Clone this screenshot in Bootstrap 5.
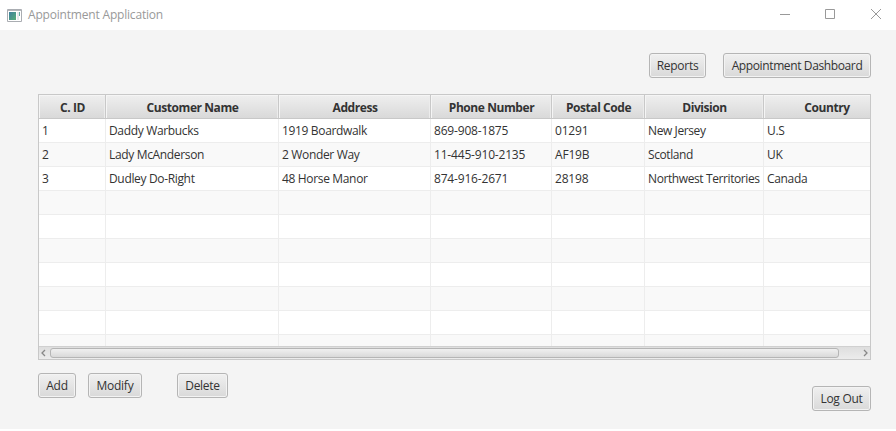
<!DOCTYPE html>
<html lang="en">
<head>
<meta charset="utf-8">
<title>Appointment Application</title>
<meta name="viewport" content="width=device-width, initial-scale=1">
<link href="https://cdn.jsdelivr.net/npm/bootstrap@5.3.0/dist/css/bootstrap.min.css" rel="stylesheet">
<style>
body{width:896px;height:431px;overflow:hidden;background:#fff;font-family:"Open Sans","Noto Sans",sans-serif;font-size:12px;line-height:16px;color:#333}
.titlebar{height:30px;background:#fff;color:#999;padding-left:7px}
.titlebar svg{display:block;flex:none}
.app-name{margin-left:6px;letter-spacing:-.19px}
.wincaps{margin-right:-2px}
.wincaps svg{width:45px;height:30px}
.workspace{height:399px;background:#f4f4f4;padding:23px 25px 0 38px}
.fx-btn{height:25px;padding:1px 0 0;border:1px solid #b5b5b5;border-radius:3px;background:linear-gradient(#f0f0f0,#d9d9d9);box-shadow:inset 0 0 0 1px #f3f3f3;color:#333;font-size:12px;line-height:16px;letter-spacing:-.28px;white-space:nowrap}
.w-rep{width:57px}.w-dash{width:148px;letter-spacing:-.38px}.w-add{width:38px}.w-mod{width:54px}.w-del{width:51px}.w-out{width:59px}
.gap-dash{margin-left:17px}.gap-mod{margin-left:12px}.gap-del{margin-left:35px}.drop-out{margin-top:13px}
.grid-box{margin-top:16px;height:266px;border:1px solid #c8c8c8;background:#fff;overflow:hidden}
.grid-rows{height:251px;overflow:hidden}
.customers{width:851px;table-layout:fixed;border-collapse:separate;border-spacing:0;margin:0;letter-spacing:-.34px}
.customers th{height:24px;padding:2px 0 0 1px;text-align:center;font-weight:700;border-right:1px solid #c8c8c8;border-bottom:1px solid #c8c8c8;background:linear-gradient(#efefef,#d9d9d9);box-shadow:inset 1px 1px 0 #f5f5f5,inset -1px 0 0 #ececec;letter-spacing:-.43px}
.customers td{height:24px;padding:0 0 0 3px;border-right:1px solid #ededed;border-bottom:1px solid #ededed;white-space:nowrap}
.customers td:nth-child(4),.customers td:nth-child(5){letter-spacing:-.18px}
.customers td:nth-child(6){letter-spacing:-.4px}
.customers tbody tr:nth-child(even){background:#f9f9f9}
.scroller{height:13px;border-top:1px solid #d0d0d0;background:linear-gradient(#dedede,#ececec)}
.scroller svg{width:11px;height:12px}
.thumb{width:789px;height:10px;border:1px solid #b5b5b5;border-radius:3px;background:linear-gradient(#f0f0f0,#d9d9d9);margin-top:1px}
.actions{margin-top:13px}
</style>
<script src="https://cdn.jsdelivr.net/npm/bootstrap@5.3.0/dist/js/bootstrap.bundle.min.js"></script>
</head>
<body>
<header class="titlebar d-flex align-items-center">
  <svg width="15" height="13" viewBox="0 0 15 13"><defs><linearGradient id="g" x2="1" y2="1"><stop stop-color="#3d7f9e"/><stop offset="1" stop-color="#55ad78"/></linearGradient></defs><path fill="#fff" stroke="#aaadb2" d="M.5.5h14v12H.5z"/><path stroke="#b4b7bc" d="M1 1.5h13"/><path fill="url(#g)" d="M2 3h7v8H2z"/><path fill="#e4e7ec" d="M10 3h2v8h-2z"/><path fill="#65aba2" d="M12 3h1v4h-1z"/></svg>
  <span class="app-name">Appointment Application</span>
  <div class="wincaps d-flex ms-auto">
    <svg viewBox="0 0 45 30"><path d="M17 14.5h10" stroke="#999"/></svg>
    <svg viewBox="0 0 45 30"><path d="M17.5 9.5h9v9h-9z" fill="none" stroke="#999"/></svg>
    <svg viewBox="0 0 45 30"><path d="M18 9l10 10M28 9l-10 10" stroke="#999"/></svg>
  </div>
</header>
<main class="workspace">
  <div class="d-flex justify-content-end">
    <button class="fx-btn w-rep">Reports</button>
    <button class="fx-btn w-dash gap-dash">Appointment Dashboard</button>
  </div>
  <div class="grid-box">
    <div class="grid-rows">
      <table class="customers">
        <colgroup><col style="width:67px"><col style="width:173px"><col style="width:152px"><col style="width:121px"><col style="width:93px"><col style="width:119px"><col style="width:126px"></colgroup>
        <thead><tr><th>C. ID</th><th>Customer Name</th><th>Address</th><th>Phone Number</th><th>Postal Code</th><th>Division</th><th>Country</th></tr></thead>
        <tbody>
          <tr><td>1</td><td>Daddy Warbucks</td><td>1919 Boardwalk</td><td>869-908-1875</td><td>01291</td><td>New Jersey</td><td>U.S</td></tr>
          <tr><td>2</td><td>Lady McAnderson</td><td>2 Wonder Way</td><td>11-445-910-2135</td><td>AF19B</td><td>Scotland</td><td>UK</td></tr>
          <tr><td>3</td><td>Dudley Do-Right</td><td>48 Horse Manor</td><td>874-916-2671</td><td>28198</td><td>Northwest Territories</td><td>Canada</td></tr>
          <tr><td></td><td></td><td></td><td></td><td></td><td></td><td></td></tr>
          <tr><td></td><td></td><td></td><td></td><td></td><td></td><td></td></tr>
          <tr><td></td><td></td><td></td><td></td><td></td><td></td><td></td></tr>
          <tr><td></td><td></td><td></td><td></td><td></td><td></td><td></td></tr>
          <tr><td></td><td></td><td></td><td></td><td></td><td></td><td></td></tr>
          <tr><td></td><td></td><td></td><td></td><td></td><td></td><td></td></tr>
          <tr><td></td><td></td><td></td><td></td><td></td><td></td><td></td></tr>
        </tbody>
      </table>
    </div>
    <div class="scroller d-flex">
      <svg viewBox="0 0 11 12"><path d="M6 3L3 6l3 3" fill="none" stroke="#888" stroke-width="1.3"/></svg>
      <div class="thumb"></div>
      <svg class="ms-auto" viewBox="0 0 11 12"><path d="M5 3l3 3-3 3" fill="none" stroke="#888" stroke-width="1.3"/></svg>
    </div>
  </div>
  <div class="actions d-flex align-items-start">
    <button class="fx-btn w-add">Add</button>
    <button class="fx-btn w-mod gap-mod">Modify</button>
    <button class="fx-btn w-del gap-del">Delete</button>
    <button class="fx-btn w-out ms-auto drop-out">Log Out</button>
  </div>
</main>
</body>
</html>
